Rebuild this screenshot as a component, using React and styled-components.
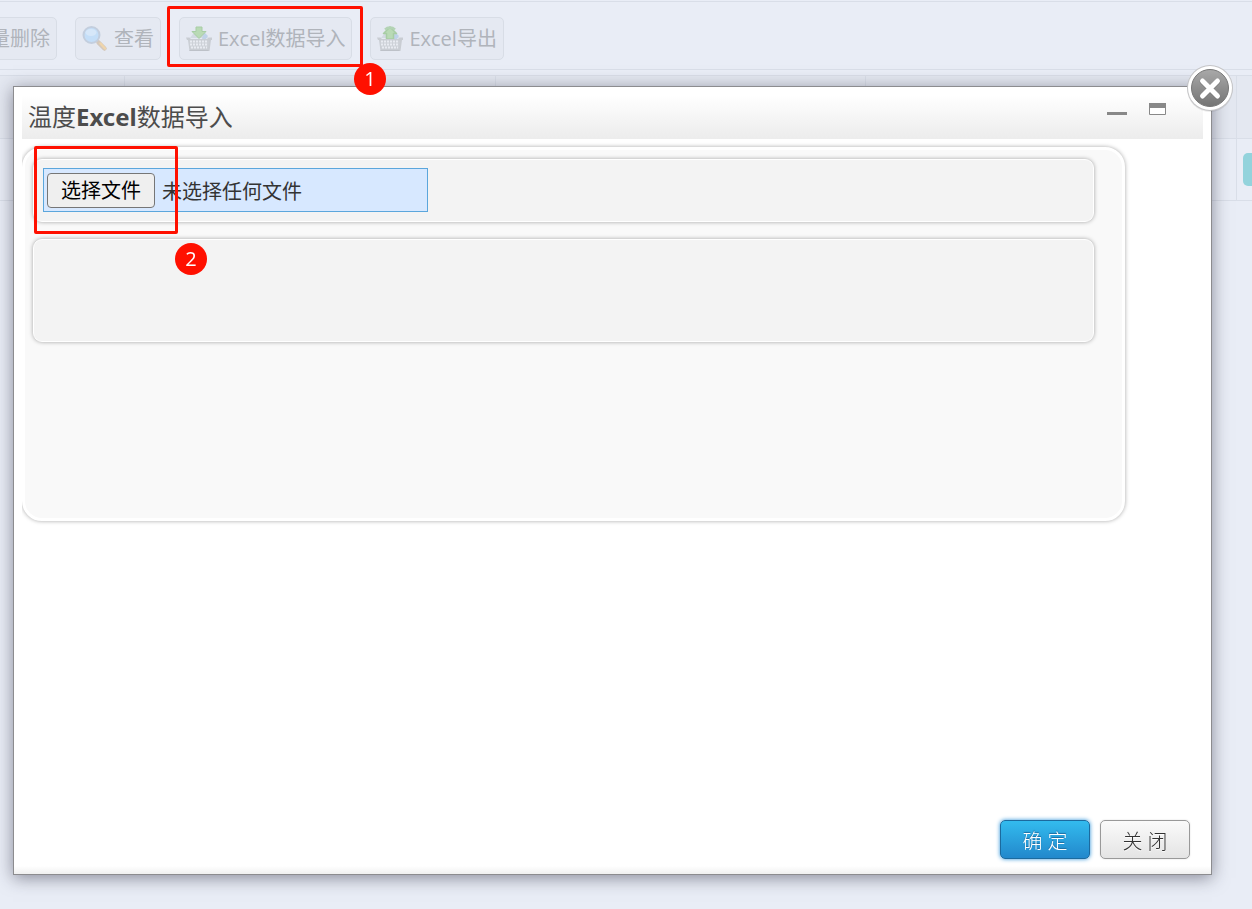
import { useRef, useState } from 'react'
import styled, { createGlobalStyle } from 'styled-components'

const GlobalStyle = createGlobalStyle`
    * {
        box-sizing: border-box;
    }

    body {
        margin: 0;
        background: #e9edf6;
    }

    body, button, input {
        font-family: "Open Sans", "Noto Sans CJK SC", sans-serif;
        font-size: 20px;
    }
`

const Page = styled.div`
    min-height: 100vh;
    padding-top: 1px;
    overflow: hidden;
    position: relative;
`

const Toolbar = styled.div`
    display: flex;
    gap: 18px;
    margin-left: -69px;
    padding: 15px 0 9px;
    border-top: 1px solid #d9dee8;
    border-bottom: 1px solid #d9dee8;
`

const ToolButton = styled.button`
    display: flex;
    align-items: center;
    gap: 6px;
    flex: none;
    height: 43px;
    padding: 0 6px;
    color: #b0b4bb;
    font-weight: 400;
    line-height: 24px;
    white-space: nowrap;
    background: #e5e9f2;
    border: 1px solid #d8dde6;
    border-radius: 5px;

    svg {
        flex: none;
    }
`

const Grid = styled.table`
    width: 100%;
    margin-top: 5px;
    table-layout: fixed;
    border-collapse: separate;
    border-spacing: 0;
    border-top: 1px solid #d9dee8;

    th, td {
        height: 62px;
        padding: 0 0 0 6px;
        border-right: 1px solid #d9dee8;
        border-bottom: 1px solid #d9dee8;
    }

    th {
        height: 63px;
        background: #e4e8f1;
    }

    th:last-child, td:last-child {
        border-right: none;
    }
`

const Col = styled.col`
    width: ${props => props.$width || 'auto'};
`

const RowAction = styled.button`
    display: block;
    width: 48px;
    height: 33px;
    background: #93d3dc;
    border: none;
    border-radius: 5px;
`

const Dialog = styled.section`
    position: fixed;
    top: 86px;
    right: 40px;
    bottom: 34px;
    left: 13px;
    display: flex;
    flex-direction: column;
    padding: 8px 8px 0;
    background: linear-gradient(to top, #f0f0f0, #fff 8px);
    border: 1px solid #8c8c8f;
    box-shadow: 0 3px 16px rgba(40, 40, 60, 0.5);
`

const TitleBar = styled.header`
    display: flex;
    align-items: center;
    gap: 22px;
    height: 44px;
    padding: 0 37px 0 6px;
    background: linear-gradient(#fff, #ececec);
`

const Title = styled.h1`
    flex: 1;
    margin: 0;
    color: #4c4c4c;
    font-family: "Noto Sans", "Noto Sans CJK SC", sans-serif;
    font-size: 24px;
    font-weight: 400;
    line-height: 32px;

    b {
        font-weight: 700;
    }
`

const WindowButton = styled.button`
    display: flex;
    align-items: center;
    height: 28px;
    margin-bottom: 16px;
    padding: 0;
    background: none;
    border: none;
`

const CloseButton = styled.button`
    position: absolute;
    top: -23px;
    right: -23px;
    width: 48px;
    height: 48px;
    padding: 0;
    background: none;
    border: none;
`

const Body = styled.div`
    flex: 1;
    padding: 8px 78px 0 0;
    overflow: hidden;
`

const Panel = styled.div`
    display: flex;
    flex-direction: column;
    gap: 17px;
    min-height: 374px;
    padding: 9px 28px 9px 8px;
    background: #f9f9f9;
    border: 3px solid #fff;
    border-radius: 20px;
    box-shadow: 0 0 4px rgba(0, 0, 0, 0.35);
`

const Box = styled.div`
    min-height: ${props => props.$height || '63px'};
    padding: 8px 9px;
    background: #f3f3f3;
    border: 1px solid #fff;
    border-radius: 9px;
    box-shadow: 0 0 4px rgba(0, 0, 0, 0.35);
`

const FileField = styled.div`
    display: flex;
    align-items: center;
    gap: 7px;
    width: 385px;
    max-width: 100%;
    height: 44px;
    padding: 0 3px;
    color: #333;
    font-weight: 400;
    background: #d7e8ff;
    border: 1px solid #5ba6dc;
`

const HiddenInput = styled.input`
    display: none;
`

const FileButton = styled.button`
    height: 35px;
    padding: 2px 13px 0;
    color: #000;
    font-weight: 400;
    line-height: 24px;
    white-space: nowrap;
    background: #efefef;
    border: 1px solid #767676;
    border-radius: 4px;
`

const Footer = styled.footer`
    display: flex;
    justify-content: flex-end;
    gap: 10px;
    padding: 0 13px 15px;
`

const ActionButton = styled.button`
    width: 90px;
    height: 39px;
    padding: 4px 0 0;
    color: ${props => props.$primary ? '#fff' : '#333'};
    font-weight: 300;
    line-height: 24px;
    text-shadow: ${props => props.$primary ? '0 -1px 1px #1c6a9e' : '0 1px 1px #fff'};
    background: ${props => props.$primary
        ? 'linear-gradient(#33bbee, #2288cc)'
        : 'linear-gradient(#fafafa, #e4e4e4)'};
    border: 1px solid ${props => props.$primary ? '#1c6a9e' : '#999'};
    border-radius: 5px;
    box-shadow: ${props => props.$primary ? '0 0 4px #2a90d8' : '0 0 2px #ddd'};
`

const Frame = styled.div`
    position: absolute;
    top: ${props => props.$top};
    left: ${props => props.$left};
    width: ${props => props.$width};
    height: ${props => props.$height};
    border: 3px solid #ff1000;
    border-radius: 2px;
    pointer-events: none;
`

const Badge = styled.span`
    position: absolute;
    top: ${props => props.$top};
    left: ${props => props.$left};
    width: 32px;
    height: 32px;
    color: #fff;
    line-height: 32px;
    text-align: center;
    background: #ff1000;
    border-radius: 50%;
`

function SearchIcon() {
    return (
        <svg width="26" height="26" viewBox="0 0 26 26">
            <path d="M16.500 16.500l6 6" stroke="#d3c8bd" strokeWidth="4.500" strokeLinecap="round" />
            <path d="M18.500 17.500l4.500 5" stroke="#efd5ac" strokeWidth="2.500" strokeLinecap="round" />
            <circle cx="9.500" cy="9" r="8" fill="#c4def8" stroke="#c3cede" strokeWidth="2" />
            <ellipse cx="9" cy="6.500" rx="5.500" ry="3.500" fill="#d6e7f9" />
        </svg>
    )
}

function BasketIcon({ out }) {
    return (
        <svg width="26" height="26" viewBox="0 0 26 26">
            <path d="M4 12l3-4h12l3 4z" fill="#d3d9e2" />
            <path d="M18 6l4 4-2 3h-4z" fill="#bfd2e8" />
            {out
                ? <path d="M13 1l6.500 6.500h-3v5.500h-7v-5.500h-3z" fill="#b9dab5" stroke="#a8cda5" strokeWidth="1.500" strokeLinejoin="round" />
                : <path d="M10 1h6v4.500h4l-7 7-7-7h4z" fill="#b9dab5" stroke="#a8cda5" strokeWidth="1" strokeLinejoin="round" />}
            {out && <path d="M8 3.500a7 7 0 0 1 10 0" fill="none" stroke="#b3d3b4" strokeWidth="2.500" />}
            <path d="M0 11.500h3.500l1.500 1.500h16l1.500-1.500h3.500v2.500h-1l-1.500 11h-20l-1.500-11h-1z" fill="#c9cdd3" />
            <path d="M3 14.500h20l-1 8h-18z" fill="#cdd1d7" />
            <path
                d="M4 15.500h18M4 18.500h18M5 21.500h16"
                stroke="#e8ebf1"
                strokeWidth="2"
                strokeDasharray="2 1"
            />
            <path d="M3.500 24.500h19" stroke="#bdc1c8" />
        </svg>
    )
}

function CloseIcon() {
    return (
        <svg width="48" height="48" viewBox="0 0 48 48">
            <defs>
                <linearGradient id="closeFill" x1="0" y1="0" x2="0" y2="1">
                    <stop offset="0" stopColor="#a9a9a9" />
                    <stop offset="1" stopColor="#747474" />
                </linearGradient>
            </defs>
            <circle cx="24" cy="25" r="23" fill="#000" opacity="0.08" />
            <circle cx="24" cy="24" r="23" fill="#c4c4c6" />
            <circle cx="24" cy="24" r="22" fill="#fff" />
            <circle cx="24" cy="24" r="18.500" fill="url(#closeFill)" stroke="#777" />
            <path d="M16.500 17.500l15 15M31.500 17.500l-15 15" stroke="#777" strokeWidth="5.500" strokeLinecap="round" />
            <path d="M16.500 17l15 15M31.500 17l-15 15" stroke="#fff" strokeWidth="5" strokeLinecap="round" />
        </svg>
    )
}

function FilePicker() {
    const input = useRef(null)
    const [name, setName] = useState('')

    return (
        <FileField>
            <HiddenInput
                ref={input}
                type="file"
                aria-label="选择文件"
                accept=".xls,.xlsx"
                onChange={e => setName(e.target.files[0]?.name || '')}
            />
            <FileButton type="button" onClick={() => input.current.click()}>选择文件</FileButton>
            <span>{name || '未选择任何文件'}</span>
        </FileField>
    )
}

function App() {
    return (
        <Page>
            <GlobalStyle />

            <Toolbar>
                <ToolButton type="button"><SearchIcon />批量删除</ToolButton>
                <ToolButton type="button"><SearchIcon />查看</ToolButton>
                <ToolButton type="button"><BasketIcon />Excel数据导入</ToolButton>
                <ToolButton type="button"><BasketIcon out />Excel导出</ToolButton>
            </Toolbar>

            <Grid>
                <colgroup>
                    <Col $width="125px" />
                    <Col />
                    <Col />
                    <Col />
                    <Col $width="15px" />
                </colgroup>
                <thead>
                    <tr><th /><th /><th /><th /><th /></tr>
                </thead>
                <tbody>
                    <tr>
                        <td /><td /><td /><td />
                        <td><RowAction type="button" aria-label="操作" /></td>
                    </tr>
                </tbody>
            </Grid>

            <Dialog role="dialog" aria-labelledby="dialog-title">
                <TitleBar>
                    <Title id="dialog-title">温度<b>Excel</b>数据导入</Title>
                    <WindowButton type="button" aria-label="最小化">
                        <svg width="20" height="12" viewBox="0 0 20 12">
                            <path d="M0 9h20v3h-20z" fill="#888" />
                        </svg>
                    </WindowButton>
                    <WindowButton type="button" aria-label="最大化">
                        <svg width="17" height="12" viewBox="0 0 17 12">
                            <path d="M0.500 0.500h16v11h-16z" fill="#fff" stroke="#888" />
                            <path d="M0 0h17v5h-17z" fill="#888" />
                        </svg>
                    </WindowButton>
                </TitleBar>

                <Body>
                    <Panel>
                        <Box><FilePicker /></Box>
                        <Box $height="103px" />
                    </Panel>
                </Body>

                <Footer>
                    <ActionButton type="button" $primary>确 定</ActionButton>
                    <ActionButton type="button">关 闭</ActionButton>
                </Footer>

                <CloseButton type="button" aria-label="关闭窗口"><CloseIcon /></CloseButton>
            </Dialog>

            <Frame $top="6px" $left="167px" $width="196px" $height="61px" />
            <Badge $top="63px" $left="354px">1</Badge>
            <Frame $top="146px" $left="34px" $width="144px" $height="88px" />
            <Badge $top="243px" $left="175px">2</Badge>
        </Page>
    )
}

export default App
